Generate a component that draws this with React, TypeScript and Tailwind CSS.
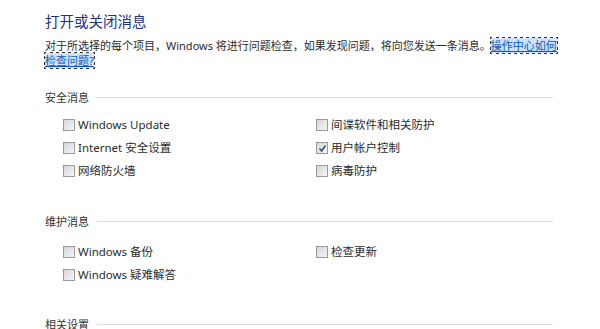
import React from "react";

const font = { fontFamily: '"Noto Sans", "Noto Sans CJK SC", sans-serif' };

function Box({ checked }: { checked?: boolean }) {
  return (
    <span className="relative inline-block w-[12px] h-[12px] border border-[#9a9a9a] bg-gradient-to-br from-[#d6d6d6] to-[#f6f6f6] shrink-0">
      {checked && (
        <svg className="absolute left-[1px] top-[1px]" width="9" height="9" viewBox="0 0 9 9">
          <path d="M1.5 4.5 L3.6 7 L7.5 1.5" stroke="#3b4a6b" strokeWidth="1.5" fill="none" />
        </svg>
      )}
    </span>
  );
}

function Item({ label, checked }: { label: string; checked?: boolean }) {
  return (
    <div className="flex items-center h-[23px] gap-[3px] text-[11.5px] text-[#2b2b2b]">
      <Box checked={checked} />
      <span className="leading-[15px]">{label}</span>
    </div>
  );
}

function Header({ label }: { label: string }) {
  return (
    <div className="flex items-center w-[508px] gap-[8px] h-[15px] text-[11px] text-[#333] leading-[15px]">
      <span>{label}</span>
      <div className="flex-1 h-px bg-[#d8dde2]" />
    </div>
  );
}

export default function App() {
  return (
    <div className="w-[600px] h-[329px] bg-white overflow-hidden pl-[45px] pt-[12px]" style={font}>
      <div className="text-[14.5px] leading-[18px] text-[#1e3287]">打开或关闭消息</div>
      <div className="mt-[8px] w-[518px] text-[11px] leading-[15px] text-[#2b2b2b]">
        对于所选择的每个项目，Windows 将进行问题检查，如果发现问题，将向您发送一条消息。
        <span className="text-[#0a58c2] underline bg-[#cfe2f8] outline-1 outline-dotted outline-[#333]">操作中心如何检查问题?</span>
      </div>

      <div className="mt-[22px]">
        <Header label="安全消息" />
      </div>
      <div className="mt-[8px] pl-[18px] grid grid-cols-[253px_253px]">
        <Item label="Windows Update" />
        <Item label="间谍软件和相关防护" />
        <Item label="Internet 安全设置" />
        <Item label="用户帐户控制" checked />
        <Item label="网络防火墙" />
        <Item label="病毒防护" />
      </div>

      <div className="mt-[32px]">
        <Header label="维护消息" />
      </div>
      <div className="mt-[11px] pl-[18px] grid grid-cols-[253px_253px]">
        <Item label="Windows 备份" />
        <Item label="检查更新" />
        <Item label="Windows 疑难解答" />
        <div />
      </div>

      <div className="mt-[31px]">
        <Header label="相关设置" />
      </div>
    </div>
  );
}
